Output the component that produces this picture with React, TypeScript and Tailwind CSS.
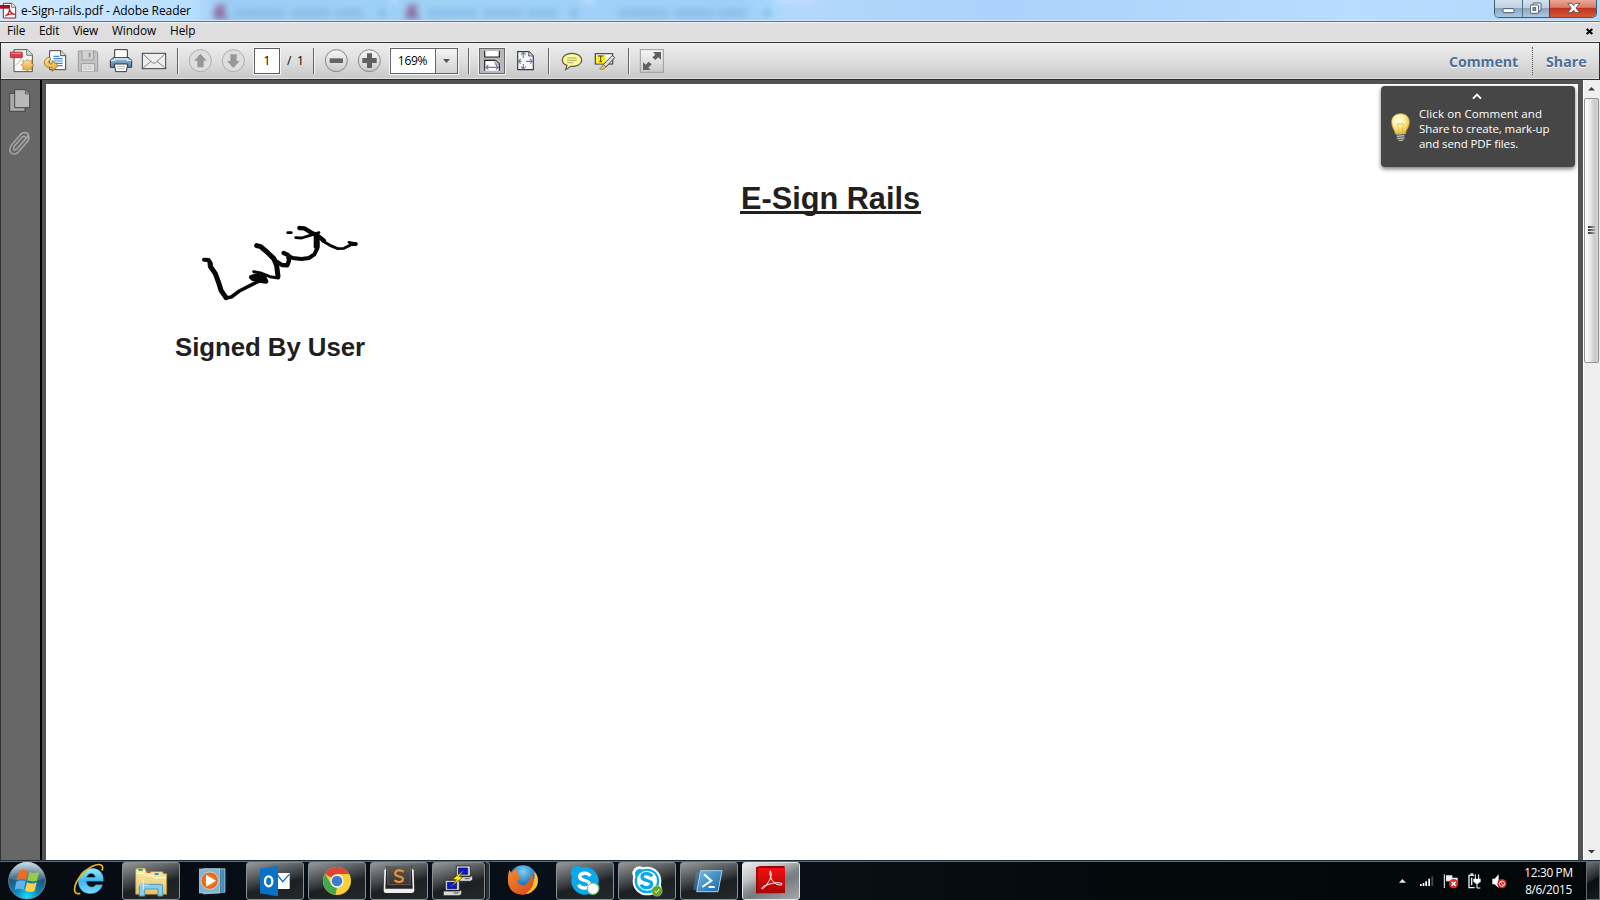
import type { ReactNode } from "react";

const UI = "font-['Open_Sans','Noto_Sans',sans-serif]";

/* Drawings use a grid of three units per pixel. */
function Glyph({ x, y, w, h, children, className = "" }: { x: number; y: number; w: number; h: number; children: ReactNode; className?: string }) {
  return (
    <svg viewBox={`${x} ${y} ${w * 3} ${h * 3}`} width={w} height={h} className={`block shrink-0 ${className}`}>
      {children}
    </svg>
  );
}

function Tool({ x, w, children, className = "" }: { x: number; w: number; children: ReactNode; className?: string }) {
  return <Glyph x={x} y={129} w={w} h={36} className={className}>{children}</Glyph>;
}

function Separator() {
  return <div className="h-[26px] w-[2px] shrink-0 border-l border-[#646464] bg-[#f5f5f5]" />;
}

function Gradients() {
  return (
    <svg width="0" height="0" className="absolute">
      <defs>
        <linearGradient id="round" x2="0" y2="1"><stop stopColor="#f8f8f8" /><stop offset="1" stopColor="#c9c9c9" /></linearGradient>
        <linearGradient id="gold" x2="0" y2="1"><stop stopColor="#fde9a6" /><stop offset="1" stopColor="#e1a12b" /></linearGradient>
        <linearGradient id="blue" x2="0" y2="1"><stop stopColor="#9fc0dd" /><stop offset="1" stopColor="#4b7aa8" /></linearGradient>
        <linearGradient id="folder" x2="0" y2="1"><stop stopColor="#f8edb0" /><stop offset="1" stopColor="#e4c465" /></linearGradient>
        <linearGradient id="ie" x2="0" y2="1"><stop stopColor="#9be8fc" /><stop offset=".5" stopColor="#3cb6ee" /><stop offset="1" stopColor="#79dcfb" /></linearGradient>
        <radialGradient id="orb" cx=".5" cy=".95" r=".9"><stop stopColor="#18e0ff" /><stop offset=".35" stopColor="#0d86bd" /><stop offset=".75" stopColor="#254f72" /><stop offset="1" stopColor="#7f9cab" /></radialGradient>
        <linearGradient id="shine" x2="0" y2="1"><stop stopColor="#dbe6ec" stopOpacity=".85" /><stop offset="1" stopColor="#7d9fb5" stopOpacity=".3" /></linearGradient>
        <linearGradient id="shell" x2="1" y2="1"><stop stopColor="#73bce8" /><stop offset="1" stopColor="#1565a6" /></linearGradient>
        <linearGradient id="adobe" x2="0" y2="1"><stop stopColor="#f50f0f" /><stop offset="1" stopColor="#a90505" /></linearGradient>
        <radialGradient id="globe" cx=".5" cy=".2" r=".9"><stop stopColor="#7cd2f6" /><stop offset=".5" stopColor="#2474ba" /><stop offset="1" stopColor="#15366f" /></radialGradient>
        <linearGradient id="fox" x2="1" y2="1"><stop stopColor="#f28b2c" /><stop offset="1" stopColor="#d8421c" /></linearGradient>
        <radialGradient id="bulb" cx=".4" cy=".35" r=".65"><stop stopColor="#fffef0" /><stop offset=".5" stopColor="#fdf0a0" /><stop offset="1" stopColor="#e9be3c" /></radialGradient>
        <radialGradient id="play"><stop stopColor="#ff9a3c" /><stop offset="1" stopColor="#e65a0b" /></radialGradient>
        <linearGradient id="key" x2="0" y2="1"><stop stopColor="#5b5b5b" /><stop offset="1" stopColor="#333" /></linearGradient>
        <filter id="soft" x="-50%" y="-50%" width="200%" height="200%"><feGaussianBlur stdDeviation="3.4" /></filter>
      </defs>
    </svg>
  );
}

function TitleBar() {
  return (
    <div className="flex h-[21px] shrink-0 overflow-hidden bg-[linear-gradient(90deg,#d3eaff_0,#b8dfff_190px,#9ccdf5_225px,#a0d2f7_480px,#9fcff8_740px,#a8d8fb_775px,#b3d8fc_790px,#acd2fb_1000px,#b8dcff_1350px,#b2d8fa_1600px)] shadow-[inset_0_-1px_0_#d5e9f8]">
      <Glyph x={0} y={0} w={21} h={21}>
        <path d="M10 10H36L47 21V54H10Z" fill="#fff" stroke="#a51820" strokeWidth="3" />
        <path d="M35 10V22H47" fill="#eee" stroke="#a51820" strokeWidth="2" />
        <rect x="0" y="15" width="30" height="11" fill="#a80f1c" />
        <path d="M16 49C25 43 29 33 28 27C31 37 37 43 45 43C36 40 22 43 16 49" fill="none" stroke="#c11725" strokeWidth="3.5" />
      </Glyph>
      <div className={`${UI} h-[21px] w-[180px] whitespace-nowrap text-[12px] leading-[21px] tracking-[-0.08px] text-black`}>e-Sign-rails.pdf - Adobe Reader</div>
      <svg width="620" height="20" viewBox="201 0 620 20" className="shrink-0">
        <g filter="url(#soft)">
          <path d="M216 5H227L223 11L229 19H213Z" fill="#8f6c9f" />
          <path d="M408 5H419L415 11L421 19H405Z" fill="#8f6c9f" />
          <g stroke="#7fb2e0" strokeWidth="8" opacity=".6" strokeDasharray="50 6 40 4">
            <path d="M235 13H363M427 13H557M618 13H747" />
          </g>
          <path d="M379 13H385M571 13H577M764 13H770" stroke="#6fa6d8" strokeWidth="8" opacity=".6" />
          <path d="M391 0H397M583 0H595M775 0H815" stroke="#c5ddff" strokeWidth="6" />
        </g>
      </svg>
      <div className="ml-auto mr-[3px] flex h-[18px] w-[103px] overflow-hidden rounded-b-[5px] border border-t-0 border-[#3e5870]">
        <div className="flex w-[28px] justify-center border-r border-[#566e85] bg-[linear-gradient(#d3e2ef_0,#bdd0e2_45%,#8ba6c1_50%,#acc8df_100%)]">
          <Glyph x={487} y={0} w={13} h={17}><rect x="490" y="26" width="33" height="12" rx="2" fill="#fff" stroke="#4d5966" strokeWidth="3" /></Glyph>
        </div>
        <div className="flex w-[27px] justify-center border-r border-[#4a4450] bg-[linear-gradient(#d3e2ef_0,#bdd0e2_45%,#8ba6c1_50%,#acc8df_100%)]">
          <Glyph x={569} y={0} w={13} h={17}>
            <rect x="578" y="9" width="24" height="24" rx="2" fill="#fff" stroke="#4d5966" strokeWidth="3" />
            <rect x="570" y="15" width="25" height="25" rx="2" fill="#fff" stroke="#4d5966" strokeWidth="3" />
            <rect x="578" y="23" width="8" height="8" fill="#8da5bc" stroke="#4d5966" strokeWidth="3" />
          </Glyph>
        </div>
        <div className="flex flex-1 justify-center bg-[linear-gradient(#eba798_0,#d97c69_43%,#bf361d_50%,#d5583a_100%)]">
          <Glyph x={678} y={0} w={15} h={17}><path d="M683 10H695L701 17L707 10H719L708 24L719 38H707L701 31L695 38H683L694 24Z" fill="#fff" stroke="#5c3f46" strokeWidth="2.5" /></Glyph>
        </div>
      </div>
    </div>
  );
}

function MenuBar() {
  return (
    <div className={`${UI} flex h-[21px] shrink-0 border-t border-[#56708c] bg-[#dedede] pl-[7px] text-[11.8px] leading-[17px] text-black shadow-[inset_0_1px_0_#f3f7fb,inset_0_-1px_0_#f0f0f0]`}>
      <span className="w-[32px] tracking-[-0.1px]">File</span>
      <span className="w-[34px] tracking-[-0.2px]">Edit</span>
      <span className="w-[39px] tracking-[-0.2px]">View</span>
      <span className="w-[58px] tracking-[-0.1px]">Window</span>
      <span className="w-[40px]">Help</span>
      <Glyph x={732} y={66} w={16} h={19} className="ml-auto"><path d="M740 87L757 102M757 87L740 102" stroke="#000" strokeWidth="6.5" /></Glyph>
    </div>
  );
}

function Toolbar() {
  return (
    <div className="flex h-[38px] shrink-0 items-center border border-[#2d2d2d] bg-[linear-gradient(#fafafa_0,#ececec_4%,#dedede_50%,#c9c9c9_96%,#f2f2f2_100%)]">
      <Tool x={3} w={38}>
        <path d="M42 149H82L97 164V215H42Z" fill="#fbfbfb" stroke="#4d4d4d" strokeWidth="3" />
        <path d="M80 149V166H97" fill="#ddd" stroke="#777" strokeWidth="3" />
        <path d="M69 163C65 178 58 189 46 195" fill="none" stroke="#cfcfcf" strokeWidth="4" />
        <rect x="31" y="156" width="36" height="17" rx="2" fill="#dd3d46" stroke="#a61820" strokeWidth="2" />
        <path d="M34 160H64" stroke="#f18a8e" strokeWidth="4" />
        <path d="M82 177L87 184L96 181L94 190L102 195L94 200L96 209L87 207L82 215L77 207L68 209L70 200L63 195L70 190L68 181L77 184Z" fill="url(#gold)" stroke="#b48023" strokeWidth="2" />
      </Tool>
      <Tool x={117} w={33}>
        <path d="M149 152H183L197 166V209H149Z" fill="#fff" stroke="#444" strokeWidth="3" />
        <path d="M182 152V167H197" fill="#e5e5e5" stroke="#444" strokeWidth="3" />
        <path d="M160 169H178M160 176H188M160 183H188M164 190H188M172 197H188" stroke="#3f87dc" strokeWidth="3.4" />
        <path d="M148 171C126 178 127 205 156 203V214L175 197L156 182V192C145 191 143 182 152 179Z" fill="url(#gold)" stroke="#92671b" strokeWidth="2.5" />
      </Tool>
      <Tool x={216} w={33}>
        <path d="M235 153H288L293 158V213H235Z" fill="#c4c4c4" stroke="#9b9b9b" strokeWidth="3" />
        <path d="M246 153V180H281V153" fill="#d3d3d3" stroke="#9b9b9b" strokeWidth="3" />
        <path d="M269 158V172" stroke="#999" strokeWidth="6" />
        <path d="M244 213V191H284V213" fill="#e3e3e3" stroke="#9b9b9b" strokeWidth="3" />
        <path d="M250 199H278M250 206H278" stroke="#aaa" strokeWidth="2" strokeDasharray="5 2" />
      </Tool>
      <Tool x={315} w={33}>
        <path d="M344 149H382V178H344Z" fill="#fff" stroke="#333" strokeWidth="3" />
        <path d="M339 173H387L395 181V202H331V181Z" fill="url(#blue)" stroke="#28384a" strokeWidth="3" />
        <path d="M333 181H344V177H382V181H394" fill="none" stroke="#dfeaf3" strokeWidth="4" />
        <path d="M343 192H383L379 215H347Z" fill="#fff" stroke="#333" strokeWidth="3" />
        <path d="M351 199H375M352 206H374" stroke="#b5b5b5" strokeWidth="3" />
      </Tool>
      <Tool x={414} w={39}>
        <rect x="427" y="160" width="70" height="46" fill="#eee" stroke="#414141" strokeWidth="3" />
        <path d="M430 163L457 188Q462 191 467 188L494 163M430 203L453 184M494 203L471 184" fill="none" stroke="#6e6e6e" strokeWidth="2.5" />
      </Tool>
      <Separator />
      <Tool x={555} w={33} className="ml-[6px]">
        <circle cx="601" cy="182" r="33" fill="#dedede" stroke="#a2a2a2" strokeWidth="2.5" />
        <path d="M601 161L620 182H611V202H592V182H582Z" fill="#989898" />
      </Tool>
      <Tool x={654} w={33}>
        <circle cx="700" cy="182" r="33" fill="#dedede" stroke="#a2a2a2" strokeWidth="2.5" />
        <path d="M700 204L719 183H710V163H691V183H681Z" fill="#989898" />
      </Tool>
      <div className={`${UI} ml-[3px] h-[26px] w-[26px] border border-[#5c5c5c] bg-white text-center text-[12px] leading-[23px] text-black outline outline-[#f5f5f5]`}>1</div>
      <div className={`${UI} ml-[7px] w-[19px] whitespace-pre text-[12px] leading-[24px] [word-spacing:2.5px] text-black`}>/ 1</div>
      <div className="ml-[7px]"><Separator /></div>
      <Tool x={0} w={33} className="ml-[5px]">
        <circle cx="49" cy="182" r="33" fill="url(#round)" stroke="#858585" strokeWidth="3" />
        <rect x="29" y="175" width="40" height="14" fill="#646464" />
      </Tool>
      <Tool x={99} w={33}>
        <circle cx="148" cy="182" r="33" fill="url(#round)" stroke="#858585" strokeWidth="3" />
        <path d="M141 160H156V174H170V189H156V204H141V189H127V174H141Z" fill="#606060" />
      </Tool>
      <div className={`${UI} ml-[4px] flex h-[26px] w-[68px] border border-[#666] bg-white text-[12px] leading-[24px] tracking-[-0.3px] text-black outline outline-[#f5f5f5]`}>
        <span className="w-[45px] border-r border-[#666] pr-px text-center">169%</span>
        <span className="flex flex-1 items-center justify-center bg-[linear-gradient(#f4f4f4,#d2d2d2)]">
          <svg width="7" height="4"><path d="M0 0H7L3.5 4Z" fill="#555" /></svg>
        </span>
      </div>
      <div className="ml-[10px]"><Separator /></div>
      <div className="ml-[9px] h-[26px] w-[26px] border border-[#686868] bg-[#b9b9b9] outline outline-[#f5f5f5]">
        <Glyph x={480} y={147} w={24} h={24}>
          <path d="M494 153V171H538V153" fill="#fff" stroke="#242424" strokeWidth="3.5" />
          <path d="M494 212V181H526L538 192V212" fill="#fff" stroke="#242424" strokeWidth="3.5" />
          <path d="M525 181V193H538" fill="#ccc" stroke="#777" strokeWidth="2" />
          <path d="M498 202H535M505 195L498 202L505 209M528 195L535 202L528 209" fill="none" stroke="#627bae" strokeWidth="3.5" />
        </Glyph>
      </div>
      <Tool x={579} w={26} className="ml-[8px]">
        <path d="M593 155H627L640 168V209H593Z" fill="#f8f8f8" stroke="#3b3b3b" strokeWidth="3.5" />
        <path d="M626 155V168H640" fill="#ccc" stroke="#666" strokeWidth="3" />
        <path d="M610 159V174M610 192V206M596 184H605M618 184H636M603 164L610 157L617 164M603 200L610 207L617 200M602 177L595 184L602 191M630 177L637 184L630 191" fill="none" stroke="#6b80b1" strokeWidth="3.5" />
      </Tool>
      <div className="ml-[9px]"><Separator /></div>
      <Tool x={717} w={33} className="ml-[9px]">
        <path d="M755 160C773 160 785 169 785 180C785 193 770 200 752 199L737 209L741 196C731 193 727 187 727 180C727 169 739 160 755 160Z" fill="#fffa96" stroke="#565650" strokeWidth="3.5" />
        <path d="M741 174H770M741 181H770M741 188H761" stroke="#9b9760" strokeWidth="2.5" />
      </Tool>
      <Tool x={816} w={33}>
        <rect x="826" y="161" width="52" height="31" fill="#fff" stroke="#444" strokeWidth="3.5" />
        <path d="M829 165H857V190H829Z" fill="#ffec15" />
        <path d="M834 168H850M842 168V185M838 185H846" stroke="#58440b" strokeWidth="3" />
        <path d="M877 166L884 173L858 201L850 194Z" fill="#ddd" stroke="#444" strokeWidth="3" />
        <path d="M850 194L858 201L850 208L839 207Z" fill="#f3c82f" stroke="#666" strokeWidth="2" />
      </Tool>
      <div className="ml-[3px]"><Separator /></div>
      <Tool x={957} w={27} className="ml-[9px]">
        <rect x="961" y="149" width="69" height="68" fill="url(#round)" stroke="#9b9b9b" strokeWidth="3" />
        <path d="M1023 156V179L1015 172L1006 180L997 172L1006 164L999 156ZM969 210V187L977 194L986 185L995 193L985 203L992 210Z" fill="#606060" />
      </Tool>
      <div className={`${UI} ml-auto flex h-[28px] items-center text-[14.2px] font-bold text-[#4c6e99] [text-shadow:0_1px_0_#fff]`}>
        <span className="w-[83px] pt-[2px] tracking-[-0.05px]">Comment</span>
        <span className="h-[28px] w-[14px] border-l border-dotted border-[#555]" />
        <span className="w-[53px] pt-[2px]">Share</span>
      </div>
    </div>
  );
}

function SideRail() {
  return (
    <div className="flex w-[42px] shrink-0 flex-col border-l border-r-2 border-l-[#333] border-r-black bg-[#676767]">
      <Glyph x={3} y={240} w={39} h={88}>
        <rect x="29" y="280" width="46" height="54" fill="#a9a9a9" stroke="#454545" strokeWidth="3" />
        <path d="M44 269H77L89 281V323H44Z" fill="#b8b8b8" stroke="#454545" strokeWidth="3" />
        <path d="M76 269V282H89" fill="#8c8c8c" stroke="#555" strokeWidth="2" />
        <path d="M79 415L50 447Q43 453 41 447Q39 443 44 437L67 411Q73 406 76 411M79 415L84 409Q88 403 80 399Q71 395 62 403L34 436Q25 450 34 459Q43 466 53 458L83 424Q90 414 84 405" fill="none" stroke="#a9a9a9" strokeWidth="4.5" strokeLinecap="round" />
      </Glyph>
    </div>
  );
}

function Signature() {
  return (
    <Glyph x={120} y={38} w={160} h={80} className="ml-[154px] mt-[8px]">
      <g fill="none" stroke="#070707" strokeLinecap="round" strokeLinejoin="round">
        <path d="M132 148L146 149L152 162" strokeWidth="12" />
        <path d="M150 157L151 168L166 190L177 220L183 240L198 262" strokeWidth="15" />
        <path d="M198 263L214 260L238 242L277 222L300 211" strokeWidth="10.5" />
        <path d="M274 201L291 196L313 203L318 213L299 210L279 205" strokeWidth="14" />
        <path d="M281 184L301 188L330 199L355 203" strokeWidth="9" />
        <path d="M290 106L302 109L321 125L341 144L350 166L354 198" strokeWidth="15" />
        <path d="M336 141L348 153L366 164L382 165L387 151L384 134L371 128" strokeWidth="13" />
        <path d="M386 137L398 143L424 146L447 143L463 132L472 114L472 98L470 78" strokeWidth="12" />
        <path d="M470 80L470 108" strokeWidth="18" />
        <path d="M418 53L433 54L453 66L474 77L492 91" strokeWidth="13" />
        <path d="M407 82L425 83L448 76L477 67" strokeWidth="8.5" />
        <path d="M383 67H394" strokeWidth="8" />
        <path d="M488 92L510 105L533 115L552 114L573 103L588 101L567 96" strokeWidth="8.5" />
        <path d="M577 101L587 101" strokeWidth="12" />
      </g>
    </Glyph>
  );
}

function Page() {
  return (
    <div className="relative flex flex-1 flex-col bg-white font-['Liberation_Sans',Arial,sans-serif] text-[#231f20]">
      <h1 className="ml-[694px] mt-[97px] h-[34px] text-[30.7px] font-bold leading-[36px]">
        <span className="inline-block h-[33px] w-[181px] whitespace-nowrap border-b-[3px] border-[#231f20] pl-px">E-Sign Rails</span>
      </h1>
      <Signature />
      <div className="ml-[129px] mt-[28px] text-[25.8px] font-bold leading-[32px] tracking-[-0.05px]">Signed By User</div>
      <div className={`${UI} absolute right-[3px] top-[2px] flex h-[81px] w-[194px] flex-col items-start rounded-[4px] bg-[#464646] text-white shadow-[0_2px_4px_#0008]`}>
        <Glyph x={390} y={258} w={14} h={19} className="ml-[89px]"><path d="M399 296L411 284L423 296" fill="none" stroke="#fff" strokeWidth="6" /></Glyph>
        <div className="flex">
          <Glyph x={123} y={315} w={38} h={40}>
            <path d="M166 402C165 389 155 384 155 366C155 350 166 341 182 341C198 341 208 351 208 366C208 383 197 389 196 402Z" fill="url(#bulb)" stroke="#d1aa3d" strokeWidth="2" />
            <path d="M176 402V382L171 374Q175 366 181 374Q187 366 191 374L187 382V402" fill="none" stroke="#e7a927" strokeWidth="2.5" />
            <path d="M170 402H193V418L187 423H177L171 418Z" fill="#bcbcbc" />
            <path d="M169 406L194 403M169 413L194 410M171 419L192 417" stroke="#4b4b4b" strokeWidth="2.5" />
          </Glyph>
          <p className="mt-px whitespace-nowrap text-[11.5px] leading-[15px] tracking-[-0.11px]"><span className="tracking-[0.1px]">Click on Comment and</span><br />Share to create, mark-up<br />and send PDF files.</p>
        </div>
      </div>
    </div>
  );
}

function ScrollBar() {
  return (
    <div className="flex w-[17px] shrink-0 flex-col items-center bg-[#efefef] shadow-[inset_1px_0_0_#fff]">
      <svg width="17" height="18"><path d="M5 10.5H12L8.5 7Z" fill="#3b3b3b" /></svg>
      <div className="flex h-[265px] w-[15px] items-center justify-center rounded-[2px] border border-[#929292] bg-[linear-gradient(90deg,#fff_0,#ededed_35%,#c9c9ce_75%,#d6d6d8_100%)]">
        <div className="mb-[2px] flex h-[8px] w-[7px] flex-col justify-between">
          <i className="h-[2px] bg-[linear-gradient(90deg,#333,#aaa)]" /><i className="h-[2px] bg-[linear-gradient(90deg,#333,#aaa)]" /><i className="h-[2px] bg-[linear-gradient(90deg,#333,#aaa)]" />
        </div>
      </div>
      <svg width="17" height="17" className="mt-auto"><path d="M5 7H12L8.5 10.5Z" fill="#3b3b3b" /></svg>
    </div>
  );
}

function TaskButton({ x, active = false, w = 58, children, className = "" }: { x: number; active?: boolean; w?: number; children: ReactNode; className?: string }) {
  return (
    <div style={{ width: w }} className={`h-[38px] shrink-0 overflow-hidden rounded-[3px] border ${active ? "border-[#e3e6e8] bg-[linear-gradient(155deg,#ededed_0,#bdbfc0_32%,#85898c_50%,#777c80_60%,#a4a8ab_100%)]" : "border-[#8a8f93] bg-[linear-gradient(165deg,#96989a_0,#5c5f62_30%,#33373a_50%,#1c2023_60%,#25292c_100%)]"} ${className}`}>
      <Glyph x={x + 3} y={36} w={w - 2} h={36}>{children}</Glyph>
    </div>
  );
}

function TaskBar() {
  return (
    <div className="flex h-[40px] shrink-0 items-center border-t border-[#1e2a35] bg-[linear-gradient(90deg,#070b12_0,#08101a_40%,#0a0f16_52%,#04090c_70%,#020708_100%)] shadow-[inset_0_1px_0_#5d6b7c]">
      <Glyph x={0} y={33} w={60} h={39}>
        <circle cx="81" cy="92" r="55" fill="url(#orb)" stroke="#839ba9" strokeWidth="2.5" />
        <path d="M29 86A52 50 0 0 1 133 86Q82 102 29 86" fill="url(#shine)" />
        <path d="M57 63Q68 55 83 63L78 89Q65 83 50 91Z" fill="#ed6a27" />
        <path d="M88 65Q102 73 118 65L111 92Q98 97 82 91Z" fill="#95cc43" />
        <path d="M49 95Q62 88 77 94L71 120Q58 113 44 120Z" fill="#62b2ec" />
        <path d="M81 97Q96 104 110 97L104 123Q92 130 75 122Z" fill="#fdcf48" />
      </Glyph>
      <Glyph x={180} y={33} w={62} h={39}>
        <path d="M310 94H259C260 113 281 116 287 104H308C299 132 267 138 247 123C228 105 233 76 251 63C282 43 314 62 310 94ZM260 82H286C284 66 263 67 260 82Z" fill="url(#ie)" stroke="#207fb3" strokeWidth="1" />
        <path d="M241 130C216 137 220 106 241 79C263 51 294 37 306 47Q310 52 306 62" fill="none" stroke="#eab516" strokeWidth="5" />
      </Glyph>
      <TaskButton x={366}>
        <path d="M407 55L413 52H435L439 62H464L468 62H489V68H500V130H407Z" fill="url(#folder)" stroke="#b3903c" strokeWidth="2" />
        <path d="M409 67H433L438 74H458L463 80H498" stroke="#fff6cb" strokeWidth="4" fill="none" />
        <path d="M415 54H428V59H415Z" fill="#19a83c" /><path d="M440 60H452V66H440Z" fill="#d2492b" /><path d="M464 66H476V72H464Z" fill="#3598db" />
        <path d="M418 135V105Q418 100 424 100H482Q488 100 488 105V135H474V114H434V135Z" fill="#8dcae5" stroke="#4a9dc1" strokeWidth="3" />
        <path d="M430 85V117M414 102H446" stroke="#fff" strokeWidth="2" />
      </TaskButton>
      <Glyph x={540} y={33} w={66} h={39}>
        <path d="M610 56H675V127L610 132Z" fill="#5b9cc0" stroke="#a4d3e5" strokeWidth="2" />
        <path d="M662 60V128M669 60V127" stroke="#27678a" strokeWidth="2" />
        <rect x="598" y="57" width="60" height="72" fill="#82b3cf" stroke="#b1dcec" strokeWidth="2" />
        <circle cx="629" cy="92" r="26" fill="url(#play)" stroke="#d8d1c5" strokeWidth="3" />
        <path d="M618 74L648 92L618 110Z" fill="#fff" />
      </Glyph>
      <TaskButton x={738}>
        <rect x="828" y="66" width="41" height="48" fill="#fff" /><path d="M831 70L848 92L868 70" fill="none" stroke="#0872c6" strokeWidth="4" />
        <path d="M780 53L834 44V136L780 127Z" fill="#0872c6" />
        <ellipse cx="806" cy="91" rx="11" ry="15" fill="none" stroke="#fff" strokeWidth="7" />
      </TaskButton>
      <TaskButton x={924} className="ml-[4px]">
        <circle cx="1011" cy="90" r="42" fill="#f8d137" />
        <path d="M1011 90L975 69A42 42 0 0 1 1048 69H1011Z" fill="#da4637" />
        <path d="M975 69L997 104L1011 111L1006 132A42 42 0 0 1 975 69" fill="#45a752" />
        <circle cx="1011" cy="90" r="20" fill="#f5f5f5" /><circle cx="1011" cy="90" r="16" fill="#3e7dcc" />
      </TaskButton>
      <TaskButton x={1110} className="ml-[4px]">
        <path d="M1153 58L1159 51H1235L1241 58L1243 119Q1242 126 1235 126H1158Q1151 126 1151 119Z" fill="#eee" />
        <path d="M1159 46H1235L1238 113H1156Z" fill="#252525" /><path d="M1162 47H1232L1230 101H1164Z" fill="url(#key)" stroke="#777" strokeWidth="2" />
        <path d="M1211 62Q1196 54 1188 61Q1180 72 1196 76Q1213 79 1208 89Q1199 98 1183 88" fill="none" stroke="#e98d32" strokeWidth="7" />
      </TaskButton>
      <TaskButton x={66} w={53} className="ml-[4px]">
        {[[0, 0], [-33, 43]].map(([dx, dy]) => (
          <g key={dx} transform={`translate(${dx} ${dy})`} stroke="#111" strokeWidth="2">
            <path d="M139 45H181V75H139Z" fill="#ddd" /><path d="M145 51H173V70H145Z" fill="#0713e7" />
            <path d="M133 77H181L188 73V86L181 91H133Z" fill="#d8d8d8" /><path d="M164 83H179" stroke="#111" />
          </g>
        ))}
        <path d="M162 57L128 84L140 86L122 108L158 79L147 76Z" fill="#ffeb0c" stroke="#4b4700" strokeWidth="2" />
      </TaskButton>
      <div className="ml-px h-[38px] w-[4px] rounded-r-[3px] border border-l-0 border-[#71767a] bg-[#2b3034]" />
      <Glyph x={240} y={33} w={66} h={39}>
        <circle cx="339" cy="90" r="44" fill="url(#globe)" />
        <path d="M298 59L304 69Q316 56 325 60Q316 70 324 77L333 81Q330 88 322 90Q324 104 339 106Q348 106 352 98Q366 89 359 76Q372 82 371 96Q378 84 371 65Q388 79 383 103Q371 134 338 134Q303 134 295 103Q291 79 298 59Z" fill="url(#fox)" />
        <path d="M374 66Q390 83 380 109Q366 130 347 132Q369 115 370 99Q376 82 374 66" fill="#fac630" />
      </Glyph>
      <TaskButton x={438}>
        <circle cx="502" cy="65" r="20" fill="#08a9ed" /><circle cx="525" cy="90" r="41" fill="#08a9ed" /><circle cx="548" cy="111" r="21" fill="#08a9ed" />
        <path d="M541 75C531 61 508 66 509 78C510 91 539 86 539 100C538 113 512 116 506 101" fill="none" stroke="#fff" strokeWidth="10" />
        <circle cx="549" cy="113" r="17" fill="#fff" stroke="#83b52d" strokeWidth="3" />
      </TaskButton>
      <TaskButton x={624} className="ml-[4px]">
        <g fill="#fff"><circle cx="688" cy="67" r="21" /><circle cx="711" cy="90" r="43" /><circle cx="734" cy="111" r="21" /></g>
        <g fill="#08a9ed"><circle cx="690" cy="69" r="15" /><circle cx="711" cy="90" r="37" /><circle cx="732" cy="109" r="15" /></g>
        <circle cx="711" cy="89" r="30" fill="#fff" />
        <path d="M726 76C716 63 695 67 696 78C697 91 725 86 725 99C724 112 699 114 693 101" fill="none" stroke="#08a9ed" strokeWidth="10" />
        <circle cx="741" cy="120" r="16" fill="#68a625" stroke="#d6e4c2" strokeWidth="1" /><path d="M734 120L739 125L748 114" fill="none" stroke="#fff" strokeWidth="3" />
      </TaskButton>
      <TaskButton x={810} className="ml-[4px]">
        <path d="M858 64H876L867 117H849ZM868 62H880L870 119H862Z" fill="#428bb8" opacity=".55" />
        <path d="M872 59H936L924 122H860Z" fill="url(#shell)" stroke="#a6d2ea" strokeWidth="3" />
        <path d="M882 70L904 89L877 108M896 108H914" fill="none" stroke="#fff" strokeWidth="6" />
      </TaskButton>
      <TaskButton x={996} active className="ml-[4px]">
        <path d="M1038 49L1050 45H1124V122L1112 127H1038Z" fill="#930707" /><rect x="1043" y="51" width="82" height="75" fill="url(#adobe)" />
        <path d="M1081 59C1089 76 1077 92 1064 108C1052 122 1052 106 1068 103C1085 96 1106 92 1116 98C1119 104 1103 104 1094 96C1083 89 1077 68 1081 59Z" fill="none" stroke="#fff" strokeWidth="3" />
      </TaskButton>
      <Glyph x={45} y={123} w={117} h={39} className="ml-auto">
        <path d="M57 188H78L67 177Z" fill="#e1e5e6" />
        <path d="M120 192H125V198H120ZM128 189H133V198H128ZM136 184H141V198H136ZM145 176H150V198H145Z" fill="#fff" /><path d="M154 169H160V198H154Z" fill="#42474a" />
        <path d="M193 163V204" stroke="#fff" strokeWidth="3" /><path d="M198 166H217V173H233V189H216V184H198Z" fill="#eee" />
        <circle cx="221" cy="191" r="14" fill="#da302d" /><path d="M215 185L227 197M227 185L215 197" stroke="#fff" strokeWidth="4" />
        <path d="M282 166H267V203H284" fill="none" stroke="#eee" strokeWidth="4" /><path d="M271 162H280M275 173V196" stroke="#eee" strokeWidth="4" />
        <path d="M286 163V177M296 163V177" stroke="#fff" strokeWidth="3" /><path d="M280 176H302V184L295 191H287L280 184Z" fill="#fff" /><path d="M291 190V204H301" fill="none" stroke="#fff" strokeWidth="3" />
        <path d="M337 176H344L356 163V204L344 193H337Z" fill="#fff" />
        <circle cx="366" cy="191" r="14" fill="#d32020" /><circle cx="366" cy="191" r="8" fill="none" stroke="#fff" strokeWidth="2.5" /><path d="M361 186L371 196" stroke="#fff" strokeWidth="3" />
      </Glyph>
      <div className={`${UI} ml-[6px] w-[61px] whitespace-nowrap text-center text-[11.8px] leading-[17px] tracking-[-0.3px] text-white`}>12:30 PM<br />8/6/2015</div>
      <div className="ml-[7px] h-[38px] w-[14px] border border-[#646b70] bg-[linear-gradient(150deg,#697073,#20272a_45%,#080d10_50%,#171d20)]" />
    </div>
  );
}

export default function App() {
  return (
    <div className="flex h-screen w-screen flex-col overflow-hidden bg-[#525252]">
      <Gradients />
      <TitleBar />
      <MenuBar />
      <Toolbar />
      <main className="flex min-h-0 flex-1">
        <SideRail />
        <div className="flex flex-1 bg-[#535353] pl-[4px] pr-[5px] pt-[4px]"><Page /></div>
        <ScrollBar />
      </main>
      <TaskBar />
    </div>
  );
}
